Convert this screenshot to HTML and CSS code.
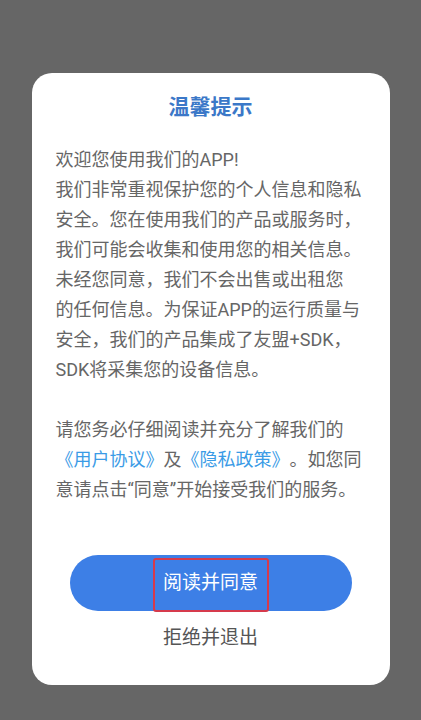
FILE: index.html
```html
<!DOCTYPE html>
<html lang="zh-CN">
<head>
<meta charset="utf-8">
<title>温馨提示</title>
<link rel="stylesheet" href="styles.css">
</head>
<body>
<div class="screen">
  <div class="dialog">
    <h1 class="title">温馨提示</h1>
    <p class="content">欢迎您使用我们的APP!<br>我们非常重视保护您的个人信息和隐私<br>安全。您在使用我们的产品或服务时，<br>我们可能会收集和使用您的相关信息。<br>未经您同意，我们不会出售或出租您<br>的任何信息。为保证APP的运行质量与<br>安全，我们的产品集成了友盟+SDK，<br>SDK将采集您的设备信息。<br><br>请您务必仔细阅读并充分了解我们的<br><a class="link">《用户协议》</a>及<a class="link">《隐私政策》</a>。如您同<br>意请点击“同意”开始接受我们的服务。</p>
    <div class="actions">
      <button class="agree"><span class="mark">阅读并同意</span></button>
      <button class="refuse">拒绝并退出</button>
    </div>
  </div>
</div>
</body>
</html>
```
FILE: styles.css
```css
html, body {
  margin: 0;
  padding: 0;
  background: #666666;
}
body {
  font-family: Roboto, "Noto Sans CJK SC", sans-serif;
  text-spacing-trim: space-all;
}
.screen {
  width: 421px;
  height: 720px;
  padding-top: 73px;
  box-sizing: border-box;
  display: flex;
  justify-content: center;
  align-items: flex-start;
}
.dialog {
  width: 358px;
  height: 612px;
  box-sizing: border-box;
  background: #ffffff;
  border-radius: 20px;
  padding: 20px 20px 0 24px;
  display: flex;
  flex-direction: column;
}
.title {
  margin: 0;
  padding-right: 4px;
  text-align: center;
  font-size: 21px;
  line-height: 28px;
  font-weight: 700;
  color: #3b78c8;
}
.content {
  margin: 24px 0 0 0;
  font-size: 18px;
  line-height: 30px;
  color: #666666;
  white-space: nowrap;
  text-spacing-trim: space-all;
}
.link {
  color: #3a9be6;
}
.actions {
  margin-top: 50px;
  display: flex;
  flex-direction: column;
  align-items: center;
  margin-left: -24px;
  margin-right: -20px;
}
.agree {
  width: 282px;
  height: 56px;
  border: none;
  border-radius: 28px;
  background: #3d7fe6;
  display: flex;
  justify-content: center;
  align-items: center;
  padding: 0;
  font-family: inherit;
}
.mark {
  box-sizing: border-box;
  width: 116px;
  height: 54px;
  margin-top: 4px;
  border: 2px solid #d63a4c;
  border-radius: 3px;
  display: flex;
  justify-content: center;
  align-items: center;
  padding-bottom: 4px;
  color: #ffffff;
  font-size: 19px;
  line-height: 26px;
}
.refuse {
  margin-top: 12px;
  border: none;
  background: transparent;
  padding: 0;
  font-family: inherit;
  font-size: 19px;
  line-height: 30px;
  color: #555555;
}
```
